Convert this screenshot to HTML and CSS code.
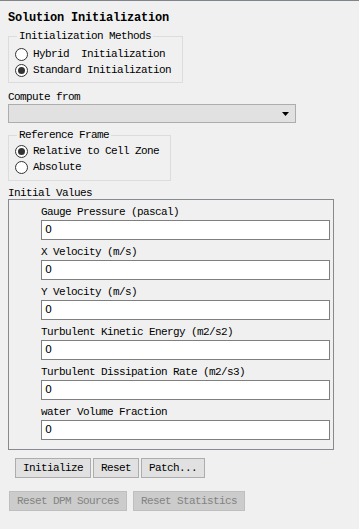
FILE: index.html
```html
<!DOCTYPE html>
<html>

<head>
    <title>Solution Initialization</title>
    <link rel="stylesheet" href="styles.css">
</head>

<body>
    <div class="panel">
        <div class="title">Solution Initialization</div>

        <fieldset class="group methods">
            <legend>Initialization Methods</legend>
            <div class="radio"><span class="dot"></span>Hybrid  Initialization</div>
            <div class="radio"><span class="dot on"></span>Standard Initialization</div>
        </fieldset>

        <div class="label">Compute from</div>
        <div class="select">
            <svg width="7" height="4" viewBox="0 0 7 4"><path d="M0 0H7L3.5 4Z" fill="#000"/></svg>
        </div>

        <fieldset class="group frame">
            <legend>Reference Frame</legend>
            <div class="radio"><span class="dot on"></span>Relative to Cell Zone</div>
            <div class="radio"><span class="dot"></span>Absolute</div>
        </fieldset>

        <div class="label values-label">Initial Values</div>
        <div class="values">
            <div class="field">
                <div class="field-name">Gauge Pressure (pascal)</div>
                <div class="input">0</div>
            </div>
            <div class="field">
                <div class="field-name">X Velocity (m/s)</div>
                <div class="input">0</div>
            </div>
            <div class="field">
                <div class="field-name">Y Velocity (m/s)</div>
                <div class="input">0</div>
            </div>
            <div class="field">
                <div class="field-name">Turbulent Kinetic Energy (m2/s2)</div>
                <div class="input">0</div>
            </div>
            <div class="field">
                <div class="field-name">Turbulent Dissipation Rate (m2/s3)</div>
                <div class="input">0</div>
            </div>
            <div class="field">
                <div class="field-name">water Volume Fraction</div>
                <div class="input">0</div>
            </div>
        </div>

        <div class="buttons">
            <div class="btn">Initialize</div>
            <div class="btn">Reset</div>
            <div class="btn">Patch...</div>
        </div>
        <div class="buttons off">
            <div class="btn">Reset DPM Sources</div>
            <div class="btn">Reset Statistics</div>
        </div>
    </div>
</body>

</html>
```

FILE: styles.css
```css
body {
    margin: 0;
    background: #f0f0f0;
    border-top: 1px solid #80858c;
    height: 528px;
    font-family: "Liberation Mono", "DejaVu Sans Mono", monospace;
    font-size: 11px;
    letter-spacing: -0.6px;
    color: #000;
}

.panel {
    padding-left: 8px;
}

.title {
    margin-top: 9px;
    line-height: 16px;
    font-size: 12px;
    font-weight: bold;
    letter-spacing: -0.2px;
}

.group {
    display: block;
    box-sizing: border-box;
    margin: 0;
    padding: 0 0 4px 6px;
    border: 1px solid #dcdcdc;
    min-inline-size: 0;
}

.group legend {
    margin-left: 2px;
    padding: 0 2px;
    line-height: 14px;
}

.methods {
    width: 175px;
    margin-top: 3px;
    padding-top: 3px;
}

.frame {
    width: 163px;
    margin-top: 5px;
    padding-top: 1px;
    padding-bottom: 5px;
}

.radio {
    display: flex;
    align-items: center;
    height: 16px;
    white-space: pre;
}

.dot {
    box-sizing: border-box;
    width: 13px;
    height: 13px;
    margin-right: 5px;
    border: 1px solid #333;
    border-radius: 50%;
    background: #fff;
    display: flex;
    align-items: center;
    justify-content: center;
}

.dot.on::after {
    content: "";
    width: 7px;
    height: 7px;
    border-radius: 50%;
    background: #333;
}

.label {
    margin-top: 7px;
    line-height: 14px;
}

.select {
    box-sizing: border-box;
    width: 288px;
    height: 19px;
    border: 1px solid #adadad;
    background: #e1e1e1;
    display: flex;
    align-items: center;
    justify-content: flex-end;
    padding-right: 6px;
}

.values-label {
    margin-top: 6px;
    line-height: 12px;
}

.values {
    box-sizing: border-box;
    width: 326px;
    border: 1px solid #878b90;
    padding: 5px 3px 9px 32px;
    display: flex;
    flex-direction: column;
    gap: 5px;
}

.field-name {
    line-height: 15px;
}

.input {
    box-sizing: border-box;
    height: 20px;
    border: 1px solid #7f7f7f;
    background: #fff;
    padding-left: 3px;
    line-height: 18px;
    font-family: "DejaVu Sans", sans-serif;
    font-size: 11px;
    letter-spacing: 0;
}

.buttons {
    display: flex;
    gap: 2px;
    margin-top: 8px;
    padding-left: 7px;
}

.btn {
    box-sizing: border-box;
    height: 20px;
    padding: 0 7px;
    border: 1px solid #adadad;
    background: #e1e1e1;
    line-height: 18px;
}

.buttons.off {
    gap: 6px;
    margin-top: 13px;
    padding-left: 1px;
}

.buttons.off .btn {
    padding: 0 7px;
    border-color: #bfbfbf;
    background: #cccccc;
    color: #838383;
}
```
